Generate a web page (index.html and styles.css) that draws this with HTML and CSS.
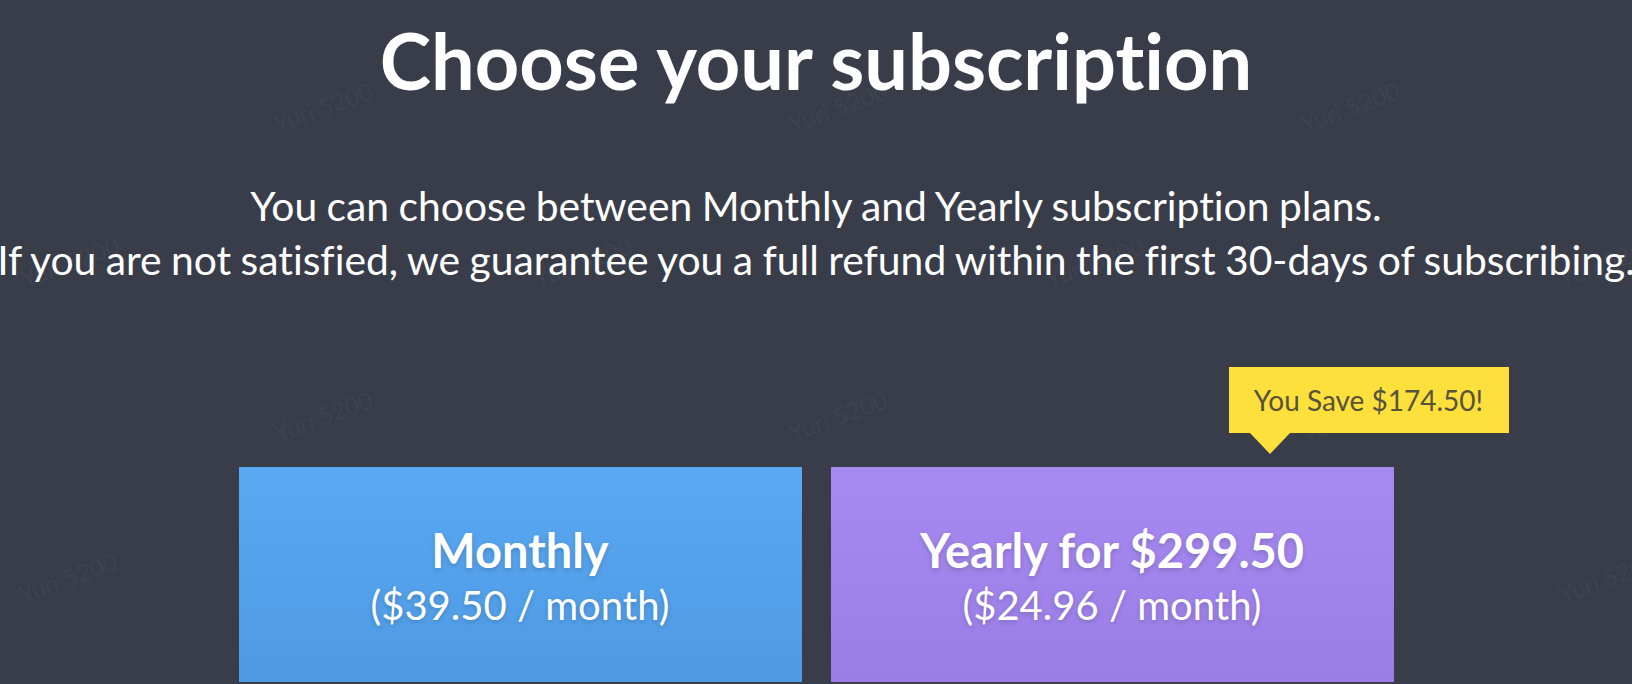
FILE: index.html
```html
<!DOCTYPE html>
<html lang="en">
<head>
<meta charset="utf-8">
<title>Choose your subscription</title>
<link rel="stylesheet" href="styles.css">
</head>
<body>
<div class="page">
  <div class="watermarks" aria-hidden="true">
    <span class="wm wm-a">Yuri 5200</span>
    <span class="wm wm-b">Yuri 5200</span>
    <span class="wm wm-c">Yuri 5200</span>
    <span class="wm wm-d">Yuri 5200</span>
    <span class="wm wm-e">Yuri 5200</span>
    <span class="wm wm-f">Yuri 5200</span>
    <span class="wm wm-g">Yuri 5200</span>
    <span class="wm wm-h">Yuri 5200</span>
    <span class="wm wm-i">Yuri 5200</span>
    <span class="wm wm-j">Yuri 5200</span>
    <span class="wm wm-k">Yuri 5200</span>
    <span class="wm wm-l">Yuri 5200</span>
    <span class="wm wm-m">Yuri 5200</span>
    <span class="wm wm-n">Yuri 5200</span>
  </div>
  <main class="content">
    <h1 class="title">Choose your subscription</h1>
    <p class="lead">You can choose between Monthly and Yearly subscription plans.<br>If you are not satisfied, we guarantee you a full refund within the first 30-days of subscribing.</p>
    <div class="plans">
      <button class="plan plan-monthly" type="button">
        <span class="plan-name">Monthly</span>
        <span class="plan-price">($39.50 / month)</span>
      </button>
      <button class="plan plan-yearly" type="button">
        <span class="badge">You Save $174.50!</span>
        <span class="plan-name">Yearly for $299.50</span>
        <span class="plan-price">($24.96 / month)</span>
      </button>
    </div>
  </main>
</div>
</body>
</html>
```

FILE: styles.css
```css
* { box-sizing: border-box; }

html, body {
  margin: 0;
  padding: 0;
  height: 100%;
}

body {
  background: #393d4a;
  color: #ffffff;
  font-family: Lato, "Open Sans", "Liberation Sans", sans-serif;
  font-variant-ligatures: no-common-ligatures;
  overflow: hidden;
}

.page {
  position: relative;
  width: 100%;
  height: 684px;
  overflow: hidden;
}

.content {
  position: relative;
  z-index: 1;
  display: flex;
  flex-direction: column;
  align-items: center;
  padding-top: 14px;
}

.title {
  margin: 0;
  font-size: 77.5px;
  font-weight: 700;
  line-height: 94px;
  color: #ffffff;
  white-space: nowrap;
}

.lead {
  margin: 71px 0 0;
  font-size: 40.8px;
  font-weight: 400;
  line-height: 54px;
  word-spacing: -1px;
  text-align: center;
  white-space: nowrap;
  color: #ffffff;
}

.plans {
  margin-top: 180px;
  display: flex;
  gap: 29px;
}

.plan {
  position: relative;
  width: 563px;
  height: 215px;
  border: 0;
  padding: 4px 0 0;
  margin: 0;
  display: flex;
  flex-direction: column;
  align-items: center;
  justify-content: center;
  font-family: inherit;
  font-variant-ligatures: no-common-ligatures;
  color: #ffffff;
  cursor: pointer;
  text-shadow: 0 2px 5px rgba(0, 0, 0, 0.18);
}

.plan-monthly {
  background: linear-gradient(180deg, #5aa8f2 0%, #4e9be4 100%);
}

.plan-yearly {
  background: linear-gradient(180deg, #a78af1 0%, #9a7ee5 100%);
}

.plan-name {
  font-size: 47px;
  font-weight: 700;
  line-height: 56px;
}

.plan-price {
  font-size: 40px;
  font-weight: 400;
  line-height: 54px;
}

.badge {
  position: absolute;
  left: 398px;
  top: -100px;
  width: 280px;
  height: 66px;
  display: flex;
  align-items: center;
  justify-content: center;
  background: #fde03b;
  color: #57523c;
  font-size: 28px;
  font-weight: 400;
  line-height: 1;
  text-shadow: none;
  white-space: nowrap;
}

.badge::after {
  content: "";
  position: absolute;
  left: 21px;
  top: 66px;
  width: 0;
  height: 0;
  border-left: 20px solid transparent;
  border-right: 20px solid transparent;
  border-top: 21px solid #fde03b;
}

.watermarks {
  position: absolute;
  inset: 0;
  z-index: 0;
  pointer-events: none;
}

.wm {
  position: absolute;
  width: 130px;
  margin-left: -65px;
  margin-top: -14px;
  text-align: center;
  font-family: Lato, "Liberation Sans", sans-serif;
  font-size: 24px;
  line-height: 28px;
  color: rgba(255, 255, 255, 0.045);
  transform: rotate(-20deg);
  white-space: nowrap;
}

.wm-a { left: 323px; top: 107px; }
.wm-b { left: 838px; top: 107px; }
.wm-c { left: 1350px; top: 107px; }
.wm-d { left: 70px; top: 262px; }
.wm-e { left: 583px; top: 262px; }
.wm-f { left: 1095px; top: 262px; }
.wm-g { left: 1608px; top: 262px; }
.wm-h { left: 323px; top: 416px; }
.wm-i { left: 838px; top: 416px; }
.wm-j { left: 1350px; top: 416px; }
.wm-k { left: 68px; top: 578px; }
.wm-l { left: 583px; top: 578px; }
.wm-m { left: 1095px; top: 578px; }
.wm-n { left: 1608px; top: 578px; }
```
